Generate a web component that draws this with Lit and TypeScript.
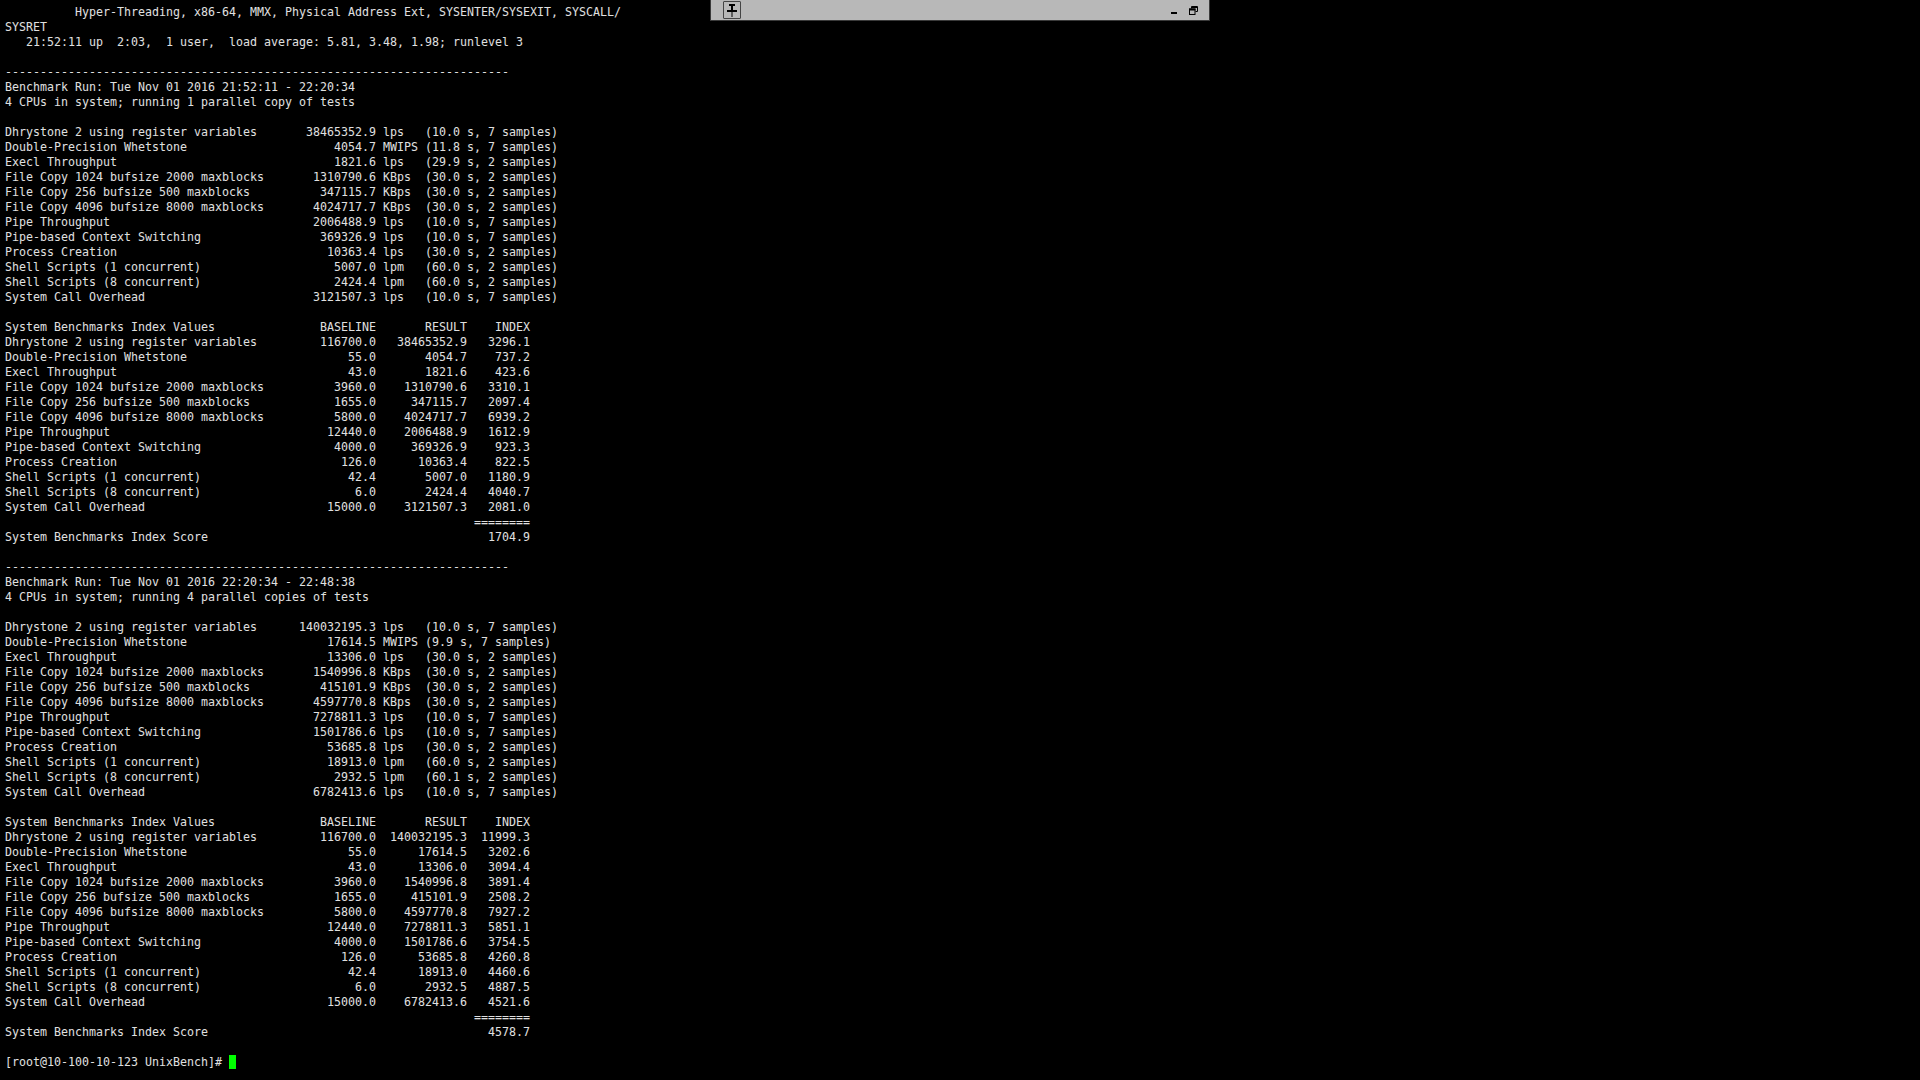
import { LitElement, html, css } from "lit";
import { customElement } from "lit/decorators.js";

const names = [
  "Dhrystone 2 using register variables",
  "Double-Precision Whetstone",
  "Execl Throughput",
  "File Copy 1024 bufsize 2000 maxblocks",
  "File Copy 256 bufsize 500 maxblocks",
  "File Copy 4096 bufsize 8000 maxblocks",
  "Pipe Throughput",
  "Pipe-based Context Switching",
  "Process Creation",
  "Shell Scripts (1 concurrent)",
  "Shell Scripts (8 concurrent)",
  "System Call Overhead",
];
const units = ["lps", "MWIPS", "lps", "KBps", "KBps", "KBps", "lps", "lps", "lps", "lpm", "lpm", "lps"];
const samples = [7, 7, 2, 2, 2, 2, 7, 7, 2, 2, 2, 7];
const baselines = ["116700.0", "55.0", "43.0", "3960.0", "1655.0", "5800.0", "12440.0", "4000.0", "126.0", "42.4", "6.0", "15000.0"];

const runs = [
  {
    title: "Benchmark Run: Tue Nov 01 2016 21:52:11 - 22:20:34",
    cpus: "4 CPUs in system; running 1 parallel copy of tests",
    results: ["38465352.9", "4054.7", "1821.6", "1310790.6", "347115.7", "4024717.7", "2006488.9", "369326.9", "10363.4", "5007.0", "2424.4", "3121507.3"],
    secs: ["10.0", "11.8", "29.9", "30.0", "30.0", "30.0", "10.0", "10.0", "30.0", "60.0", "60.0", "10.0"],
    index: ["3296.1", "737.2", "423.6", "3310.1", "2097.4", "6939.2", "1612.9", "923.3", "822.5", "1180.9", "4040.7", "2081.0"],
    score: "1704.9",
  },
  {
    title: "Benchmark Run: Tue Nov 01 2016 22:20:34 - 22:48:38",
    cpus: "4 CPUs in system; running 4 parallel copies of tests",
    results: ["140032195.3", "17614.5", "13306.0", "1540996.8", "415101.9", "4597770.8", "7278811.3", "1501786.6", "53685.8", "18913.0", "2932.5", "6782413.6"],
    secs: ["10.0", "9.9", "30.0", "30.0", "30.0", "30.0", "10.0", "10.0", "30.0", "60.0", "60.1", "10.0"],
    index: ["11999.3", "3202.6", "3094.4", "3891.4", "2508.2", "7927.2", "5851.1", "3754.5", "4260.8", "4460.6", "4887.5", "4521.6"],
    score: "4578.7",
  },
];

function buildLog(): string {
  const out: string[] = [
    "          Hyper-Threading, x86-64, MMX, Physical Address Ext, SYSENTER/SYSEXIT, SYSCALL/",
    "SYSRET",
    "   21:52:11 up  2:03,  1 user,  load average: 5.81, 3.48, 1.98; runlevel 3",
    "",
  ];
  for (const r of runs) {
    out.push("-".repeat(72), r.title, r.cpus, "");
    names.forEach((n, i) => {
      out.push(
        `${n.padEnd(40)}${r.results[i].padStart(13)} ${units[i].padEnd(5)} (${r.secs[i]} s, ${samples[i]} samples)`
      );
    });
    out.push("");
    out.push(`${"System Benchmarks Index Values".padEnd(40)}${"BASELINE".padStart(13)}${"RESULT".padStart(13)}${"INDEX".padStart(9)}`);
    names.forEach((n, i) => {
      out.push(`${n.padEnd(40)}${baselines[i].padStart(13)}${r.results[i].padStart(13)}${r.index[i].padStart(9)}`);
    });
    out.push(" ".repeat(67) + "========");
    out.push(`${"System Benchmarks Index Score".padEnd(66)}${r.score.padStart(9)}`);
    out.push("");
  }
  out.push("");
  return out.join("\n");
}

@customElement("app-root")
export class AppRoot extends LitElement {
  static styles = css`
    :host {
      display: block;
      position: relative;
      height: 1080px;
      overflow: hidden;
      background: #000;
    }
    .term {
      margin: 0;
      padding: 5px 0 0 5px;
      font-family: "DejaVu Sans Mono", monospace;
      font-size: 11.63px;
      line-height: 15px;
      color: #e0e0e0;
      white-space: pre;
    }
    .cursor {
      display: inline-block;
      width: 7px;
      height: 14px;
      background: #00ff00;
      vertical-align: -3px;
    }
    .bar {
      position: absolute;
      top: 0;
      left: 710px;
      width: 500px;
      height: 21px;
      box-sizing: border-box;
      display: flex;
      align-items: center;
      justify-content: space-between;
      background: #b8b8b8;
      border: 1px solid #3a3a3a;
      border-top: 0;
      padding: 0 11px 0 12px;
    }
    .pin {
      width: 18px;
      height: 18px;
      box-sizing: border-box;
      border: 1px solid #444;
      border-radius: 1px;
      display: flex;
      align-items: center;
      justify-content: center;
    }
    .controls {
      display: flex;
      gap: 11px;
      align-items: center;
    }
    svg {
      display: block;
    }
  `;

  render() {
    return html`
      <pre class="term">${buildLog()}[root@10-100-10-123 UnixBench]# <span class="cursor"></span></pre>
      <div class="bar">
        <div class="pin">
          <svg width="12" height="14" viewBox="0 0 12 14">
            <path d="M3 1h6v2H7v4h4v2H1V7h4V3H3zM5.5 9h1v5h-1z" fill="#000"></path>
          </svg>
        </div>
        <div class="controls">
          <svg width="8" height="10" viewBox="0 0 8 10"><rect x="1" y="7" width="6" height="2" fill="#000"></rect></svg>
          <svg width="9" height="9" viewBox="0 0 9 9">
            <path d="M2.5 .5h6v5H6.5M2.5 .5v2M2.5 1.5h6" fill="none" stroke="#000"></path>
            <rect x=".5" y="3" width="5.5" height="5.5" fill="none" stroke="#000"></rect>
            <rect x="0" y="2.5" width="6.5" height="2" fill="#000"></rect>
          </svg>
        </div>
      </div>
    `;
  }
}
